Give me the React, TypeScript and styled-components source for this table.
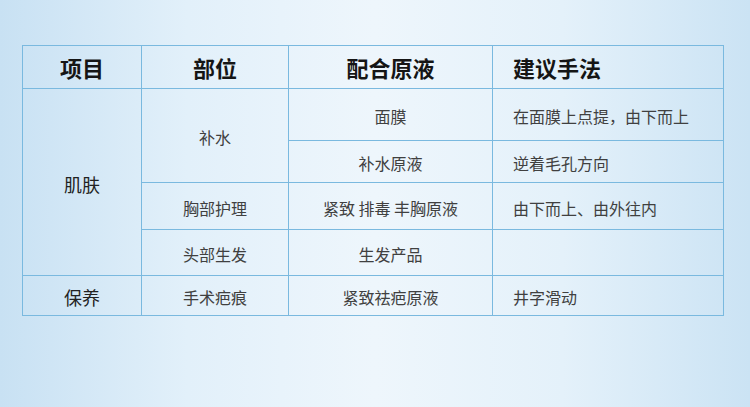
import React from 'react';
import styled, { createGlobalStyle } from 'styled-components';

const GlobalStyle = createGlobalStyle`
  html, body {
    margin: 0;
    padding: 0;
  }
  body {
    font-family: "Noto Sans CJK SC", "Liberation Sans", sans-serif;
  }
`;

const Page = styled.div`
  width: 750px;
  height: 407px;
  box-sizing: border-box;
  padding: 45px 0 0 22px;
  background: linear-gradient(
    90deg,
    #c8e1f3 0%,
    #e2f0fa 25%,
    #eef6fc 50%,
    #e4f1fa 75%,
    #cbe3f4 100%
  );
`;

const Table = styled.table`
  border-collapse: collapse;
  table-layout: fixed;
  width: 701px;
  color: #404040;
`;

const HeadCell = styled.th<{ $left?: boolean }>`
  border: 1px solid #7ab9df;
  height: 42px;
  padding: 0 0 0 ${(p) => (p.$left ? '20px' : '0')};
  font-size: 22px;
  font-weight: 700;
  color: #151515;
  text-align: ${(p) => (p.$left ? 'left' : 'center')};
`;

const Cell = styled.td<{ $left?: boolean; $h?: number }>`
  border: 1px solid #7ab9df;
  padding: 3px 0 0 ${(p) => (p.$left ? '20px' : '0')};
  height: ${(p) => (p.$h ? `${p.$h - 3}px` : 'auto')};
  font-size: 16px;
  text-align: ${(p) => (p.$left ? 'left' : 'center')};
  vertical-align: middle;
  white-space: nowrap;
`;

const GroupCell = styled(Cell)`
  font-size: 18px;
  color: #222;
`;

export default function App() {
  return (
    <>
      <GlobalStyle />
      <Page>
        <Table>
          <colgroup>
            <col style={{ width: 119 }} />
            <col style={{ width: 147 }} />
            <col style={{ width: 204 }} />
            <col style={{ width: 231 }} />
          </colgroup>
          <thead>
            <tr>
              <HeadCell>项目</HeadCell>
              <HeadCell>部位</HeadCell>
              <HeadCell>配合原液</HeadCell>
              <HeadCell $left>建议手法</HeadCell>
            </tr>
          </thead>
          <tbody>
            <tr>
              <GroupCell rowSpan={4}>肌肤</GroupCell>
              <Cell rowSpan={2}>补水</Cell>
              <Cell $h={51}>面膜</Cell>
              <Cell $left>在面膜上点提，由下而上</Cell>
            </tr>
            <tr>
              <Cell $h={41}>补水原液</Cell>
              <Cell $left>逆着毛孔方向</Cell>
            </tr>
            <tr>
              <Cell $h={46}>胸部护理</Cell>
              <Cell>紧致 排毒 丰胸原液</Cell>
              <Cell $left>由下而上、由外往内</Cell>
            </tr>
            <tr>
              <Cell $h={45}>头部生发</Cell>
              <Cell>生发产品</Cell>
              <Cell $left></Cell>
            </tr>
            <tr>
              <GroupCell $h={39}>保养</GroupCell>
              <Cell>手术疤痕</Cell>
              <Cell>紧致祛疤原液</Cell>
              <Cell $left>井字滑动</Cell>
            </tr>
          </tbody>
        </Table>
      </Page>
    </>
  );
}
